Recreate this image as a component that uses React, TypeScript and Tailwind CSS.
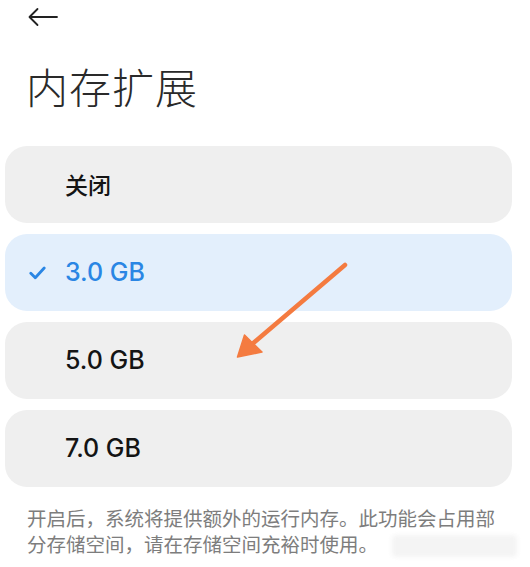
import React from "react";

const latin = "font-['Inter','Noto_Sans_CJK_SC',sans-serif]";
const cjk = "font-['Noto_Sans_CJK_SC','Noto_Sans',sans-serif]";

type Option = { label: string; cn?: boolean; selected?: boolean };

const options: Option[] = [
  { label: "关闭", cn: true },
  { label: "3.0 GB", selected: true },
  { label: "5.0 GB" },
  { label: "7.0 GB" },
];

function BackArrow() {
  return (
    <svg width="32" height="20" viewBox="0 0 32 20" fill="none">
      <path
        d="M30 10H3M10.5 2L2.5 10L10.5 18"
        stroke="#222"
        strokeWidth="1.8"
        strokeLinecap="round"
        strokeLinejoin="round"
      />
    </svg>
  );
}

function Check() {
  return (
    <svg width="17" height="14" viewBox="0 0 17 14" fill="none">
      <path
        d="M1.8 7.2L6.3 11.8L15.2 2"
        stroke="#2a86e4"
        strokeWidth="2.8"
        strokeLinecap="round"
        strokeLinejoin="round"
      />
    </svg>
  );
}

function OptionCard({ opt }: { opt: Option }) {
  return (
    <div
      className={`relative flex h-[77px] items-center rounded-[22px] pl-[60px] ${
        opt.selected ? "bg-[#e3effc]" : "bg-[#efefef]"
      }`}
    >
      {opt.selected && (
        <span className="absolute left-[24px] top-[32px]">
          <Check />
        </span>
      )}
      <span
        className={
          opt.cn
            ? `${cjk} text-[23px] font-medium text-[#141414]`
            : `${latin} text-[25px] font-medium ${
                opt.selected ? "text-[#2a86e4]" : "text-[#141414]"
              }`
        }
      >
        {opt.label}
      </span>
    </div>
  );
}

export default function App() {
  return (
    <div className="relative h-[567px] w-[530px] overflow-hidden bg-white">
      <div className="flex h-[34px] items-center pl-[27px]">
        <BackArrow />
      </div>

      <h1
        className={`${cjk} mt-[31px] pl-[26px] text-[42px] font-light leading-none tracking-[1px] text-[#2a2a2a]`}
      >
        内存扩展
      </h1>

      <div className="mt-[39px] flex w-[507px] flex-col gap-[11px] pl-[5px] box-content">
        {options.map((o) => (
          <OptionCard key={o.label} opt={o} />
        ))}
      </div>

      <p
        className={`${cjk} mt-[18px] pl-[27px] pr-[30px] text-[19.5px] leading-[26px] text-[#7d7d7d]`}
      >
        开启后，系统将提供额外的运行内存。此功能会占用部分存储空间，请在存储空间充裕时使用。
      </p>

      {/* annotation arrow pointing at the 5.0 GB option */}
      <svg
        className="pointer-events-none absolute left-0 top-0"
        width="530"
        height="567"
        viewBox="0 0 530 567"
      >
        <path
          d="M345 265L251 345"
          stroke="#f47b40"
          strokeWidth="4.5"
          strokeLinecap="round"
        />
        <path
          d="M237.5 357L244.5 335L262 352Z"
          fill="#f47b40"
          stroke="#f47b40"
          strokeWidth="1.5"
          strokeLinejoin="round"
        />
      </svg>

      {/* faint smudge near the bottom-right corner */}
      <div className="absolute left-[392px] top-[535px] h-[22px] w-[125px] rounded-sm bg-[#f4f4f4] blur-[2px]" />
    </div>
  );
}
